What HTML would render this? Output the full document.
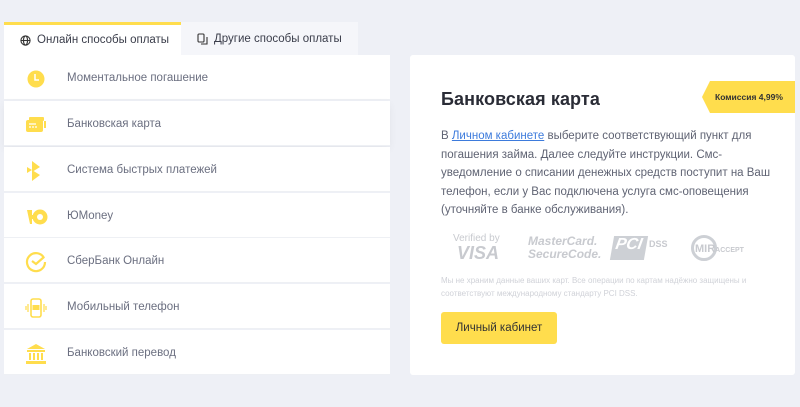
<!DOCTYPE html>
<html><head><meta charset="utf-8"><style>
*{margin:0;padding:0;box-sizing:border-box}
body{width:800px;height:407px;background:#eef0f6;font-family:"Liberation Sans","Noto Sans CJK SC",sans-serif;position:relative;overflow:hidden}
.tab{position:absolute;top:22px;height:33px;font-size:11.5px;color:#3a3d4a;display:flex;align-items:center}
.t1{left:4px;width:177px;background:#fff;border-top:3px solid #ffdd4d;padding-left:16px}
.t2{left:181px;width:177px;background:#f5f6fa;padding-left:16px}
.row{position:absolute;left:4px;width:386px;height:45px;background:#fff;border-bottom:1px solid #eef0f4;font-size:11.5px;color:#6b6f80}
.row span{position:absolute;left:63px;top:17px}
.row svg{position:absolute;left:20px;top:12px}
.card{position:absolute;left:410px;top:55px;width:385px;height:320px;background:#fff;border-radius:3px}
h2{position:absolute;left:31px;top:34px;font-size:18px;font-weight:bold;color:#2a2c36;letter-spacing:0.1px}
.badge{position:absolute;left:292px;top:26px;width:93px;height:32px;background:#ffdd4d;clip-path:polygon(8px 0,100% 0,100% 100%,8px 100%,0 50%);font-size:8.5px;font-weight:bold;color:#333;padding:11px 0 0 13px}
.p{position:absolute;left:31px;top:72px;width:340px;font-size:11.5px;line-height:18.5px;color:#5f6373}
.p a{color:#3d7bdc;text-decoration:underline}
.logos{position:absolute;left:31px;top:178px;color:#c8cacf;font-weight:bold}
.small{position:absolute;left:31px;top:220px;width:350px;font-size:8px;line-height:12.5px;color:#d0d2d8}
.btn{position:absolute;left:31px;top:257px;width:116px;height:32px;background:#ffdd4d;border-radius:3px;font-size:11.5px;color:#333;text-align:center;line-height:32px}
</style></head><body>
<div class="tab t1"><svg width="11" height="11" viewBox="0 0 12 12" style="margin-right:6px"><g fill="none" stroke="#333" stroke-width="1.2"><circle cx="6" cy="6" r="5"/><ellipse cx="6" cy="6" rx="2.2" ry="5"/><path d="M1 6h10"/></g></svg>Онлайн способы оплаты</div>
<div class="tab t2"><svg width="11" height="12" viewBox="0 0 11 12" style="margin-right:6px"><g fill="none" stroke="#333" stroke-width="1.1"><rect x="1" y="1" width="6" height="8" rx="1"/><path d="M4 11h6V4"/></g></svg>Другие способы оплаты</div>

<div class="row" style="top:55px"><svg width="24" height="24" viewBox="0 0 24 24"><circle cx="12" cy="12" r="8.5" fill="#ffdd4d"/><path d="M11 7v6h4" stroke="#fff" stroke-width="1.5" fill="none"/></svg><span>Моментальное погашение</span></div>
<div class="row" style="top:101px;box-shadow:0 3px 8px rgba(0,0,0,.05)"><svg width="24" height="24" viewBox="0 0 24 24"><rect x="5" y="4" width="15" height="4" rx="1" fill="#ffdd4d"/><rect x="2" y="7" width="17" height="12" rx="2" fill="#ffdd4d"/><rect x="20" y="8" width="2" height="7" fill="#ffdd4d"/><path d="M5 11h7M5 14h2M8 14h2M11 14h2" stroke="#fff" stroke-width="1.2"/></svg><span>Банковская карта</span></div>
<div class="row" style="top:147px"><svg width="24" height="24" viewBox="0 0 24 24"><path d="M8 2l8 6-8 5V2zM8 11l8 5-8 6V11zM3 8l5 3-5 3z" fill="#ffdd4d"/></svg><span>Система быстрых платежей</span></div>
<div class="row" style="top:193px"><svg width="28" height="24" viewBox="0 0 28 24"><path d="M3 5h5v14H6z" fill="#ffdd4d"/><circle cx="16" cy="12" r="7.5" fill="#ffdd4d"/><circle cx="16" cy="12" r="3" fill="#fff"/><rect x="7" y="10" width="3" height="4" fill="#ffdd4d"/></svg><span>ЮMoney</span></div>
<div class="row" style="top:238px"><svg width="24" height="24" viewBox="0 0 24 24"><path d="M20 8A9 9 0 1 0 21 12" fill="none" stroke="#ffdd4d" stroke-width="2.2"/><path d="M8 11l4 3 8-7" fill="none" stroke="#ffdd4d" stroke-width="2.2"/></svg><span>СберБанк Онлайн</span></div>
<div class="row" style="top:284px"><svg width="24" height="24" viewBox="0 0 24 24"><rect x="7" y="3" width="10" height="18" rx="2" fill="none" stroke="#ffdd4d" stroke-width="1.6"/><rect x="8.5" y="9" width="7" height="5" fill="#ffdd4d"/><path d="M4 8v8M2 10v4M20 8v8M22 10v4" stroke="#ffdd4d" stroke-width="1.2"/></svg><span>Мобильный телефон</span></div>
<div class="row" style="top:330px"><svg width="24" height="24" viewBox="0 0 24 24"><path d="M12 2l9 5H3z" fill="#ffdd4d"/><rect x="3" y="8" width="18" height="2" fill="#ffdd4d"/><path d="M6 11v7M10 11v7M14 11v7M18 11v7" stroke="#ffdd4d" stroke-width="2"/><rect x="2" y="19" width="20" height="3" fill="#ffdd4d"/></svg><span>Банковский перевод</span></div>

<div class="card">
<h2>Банковская карта</h2>
<div class="badge">Комиссия 4,99%</div>
<div class="p">В <a>Личном кабинете</a> выберите соответствующий пункт для погашения займа. Далее следуйте инструкции. Смс-уведомление о списании денежных средств поступит на Ваш телефон, если у Вас подключена услуга смс-оповещения (уточняйте в банке обслуживания).</div>
<div class="logos">
<div style="position:absolute;left:12px;top:0;font-size:10px;font-weight:normal;width:60px">Verified by</div>
<div style="position:absolute;left:16px;top:10px;font-size:18px;font-style:italic">VISA</div>
<div style="position:absolute;left:87px;top:2px;font-size:12px;font-style:italic;line-height:13px;white-space:nowrap">MasterCard.<br>SecureCode.</div>
<div style="position:absolute;left:171px;top:3px;width:34px;height:24px;background:#cdd0d5;transform:skewX(-10deg);color:#fff;font-size:16px;padding-left:3px;font-style:italic">PCI</div>
<div style="position:absolute;left:208px;top:6px;font-size:9px">DSS</div>
<div style="position:absolute;left:250px;top:2px;width:26px;height:26px;border:3px solid #cdd0d5;border-radius:50%"></div>
<div style="position:absolute;left:254px;top:10px;font-size:11px;white-space:nowrap">MIR<span style="font-size:7px">ACCEPT</span></div>
</div>
<div class="small">Мы не храним данные ваших карт. Все операции по картам надёжно защищены и соответствуют международному стандарту PCI DSS.</div>
<div class="btn">Личный кабинет</div>
</div>
</body></html>
